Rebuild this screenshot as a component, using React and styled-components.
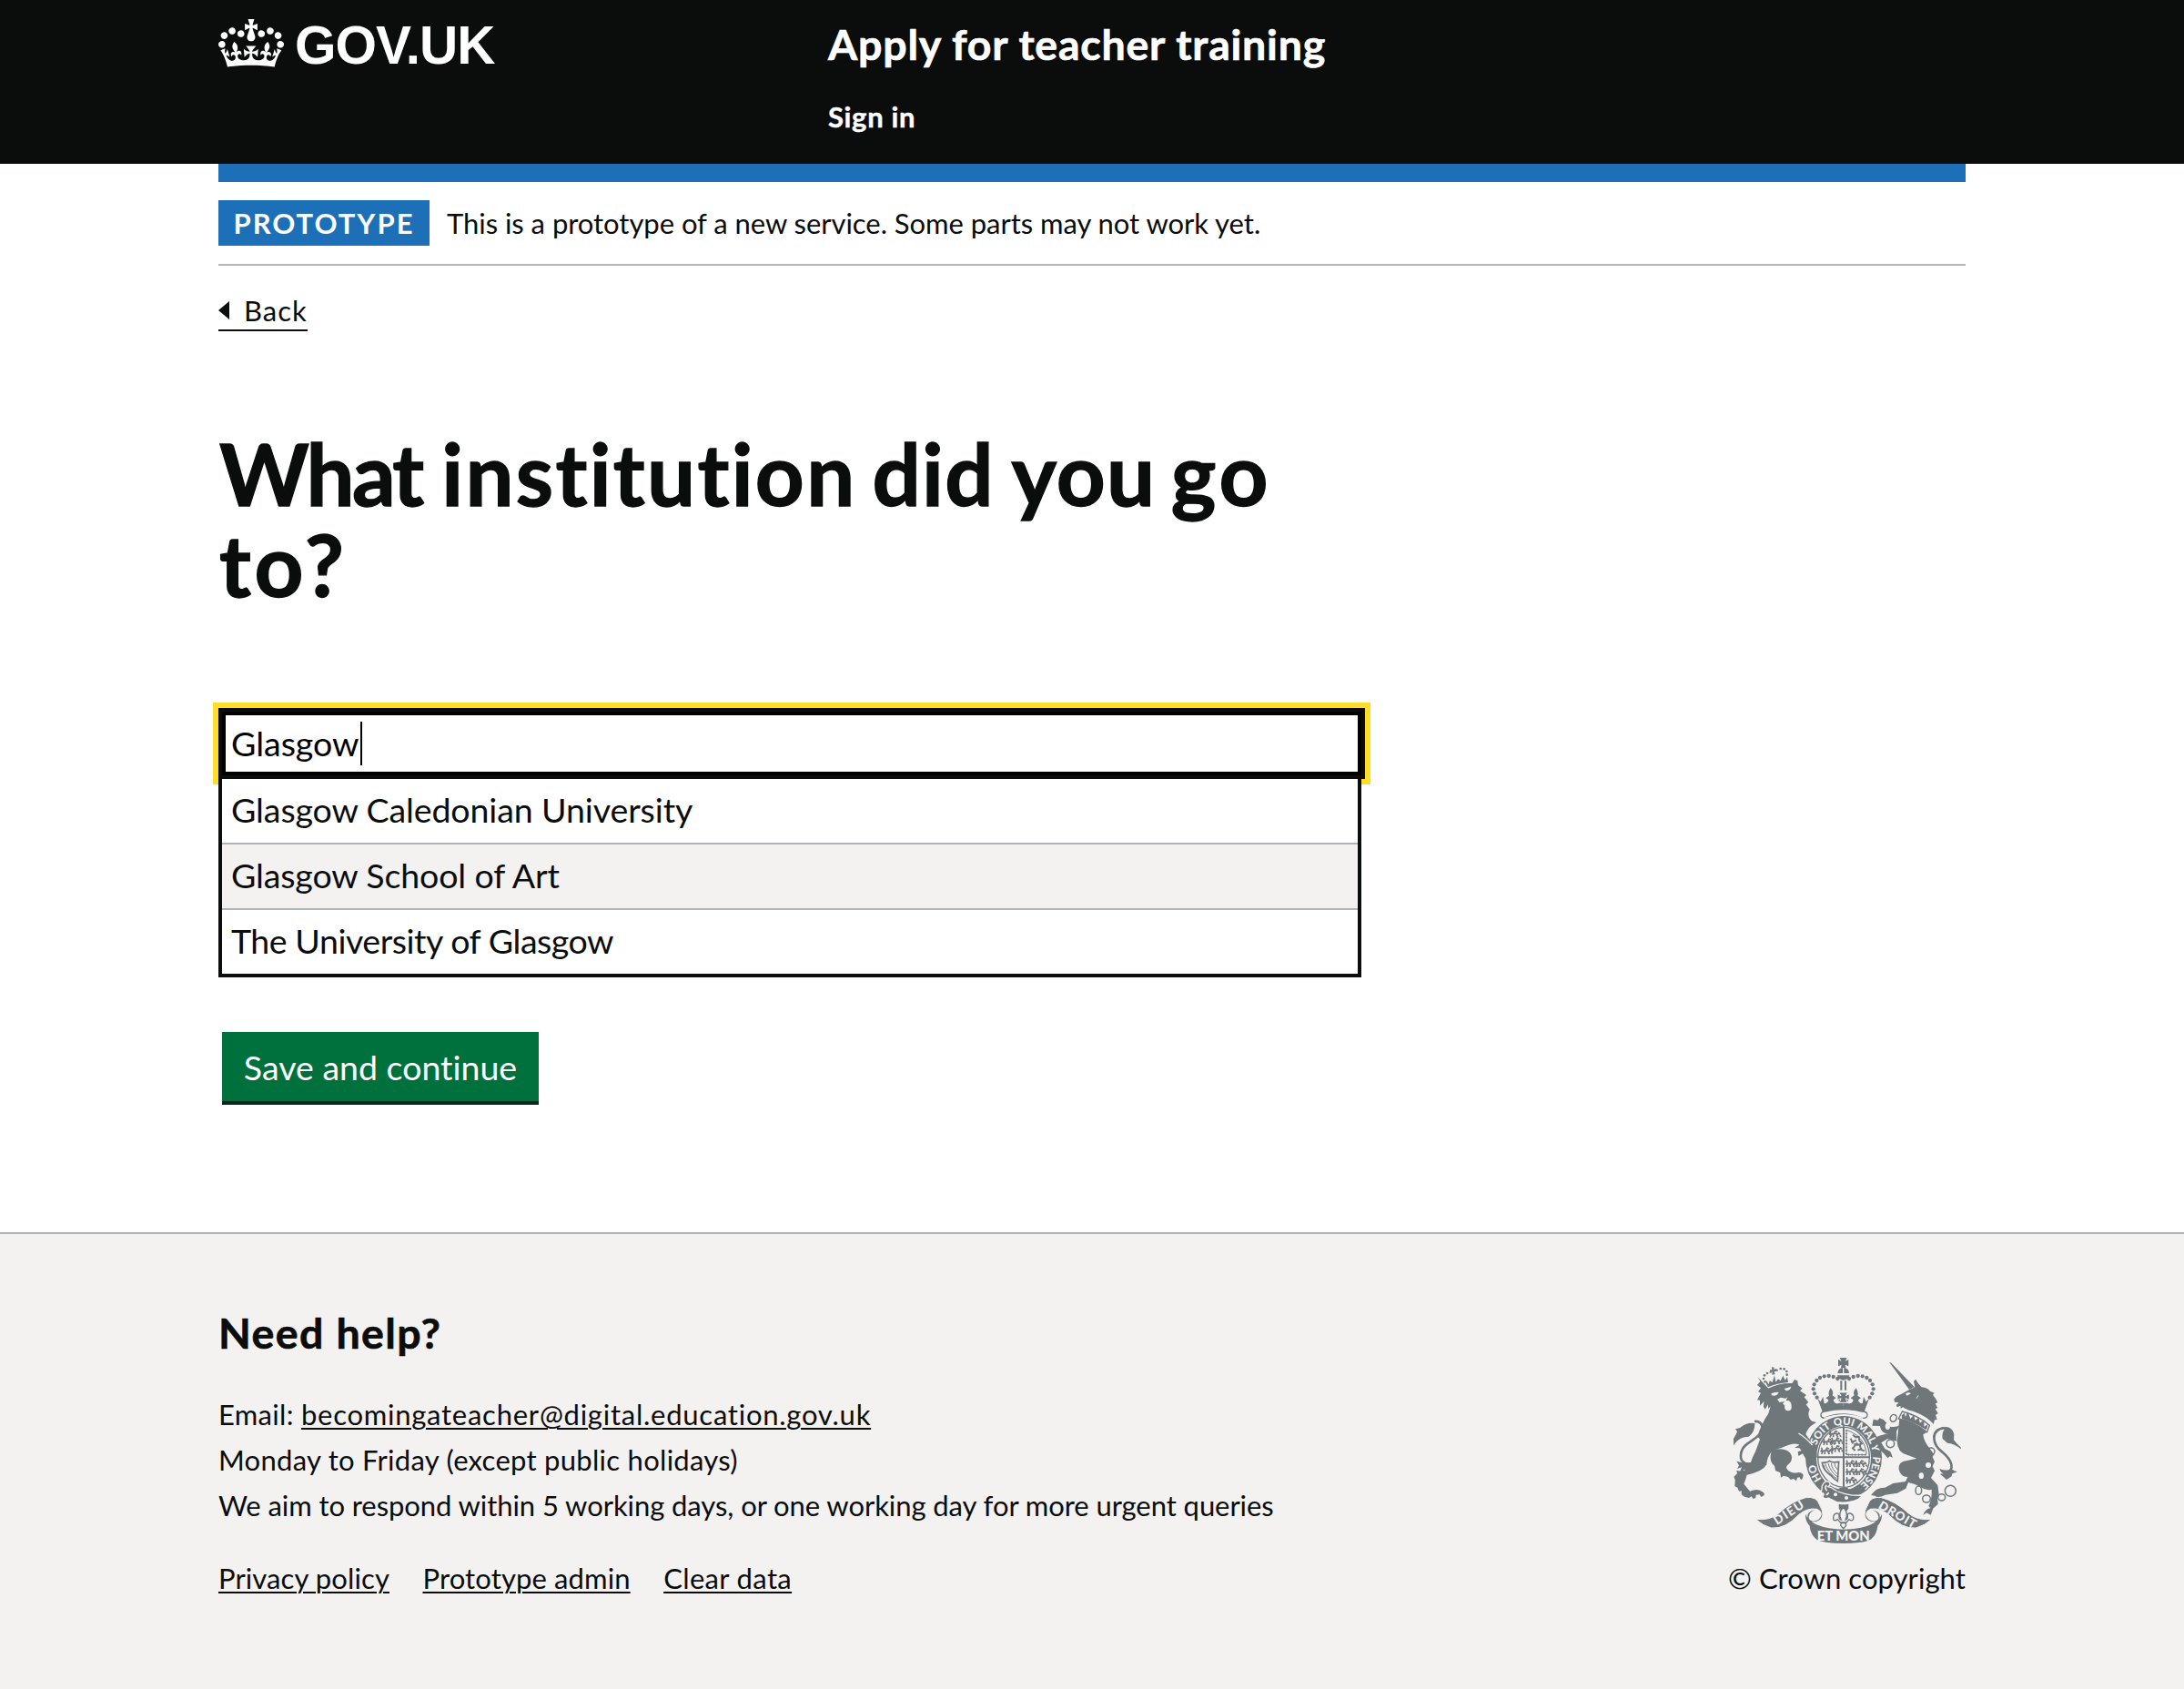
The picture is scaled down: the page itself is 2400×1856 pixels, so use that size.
import React from "react";
import styled, { createGlobalStyle, css } from "styled-components";

const ink = "#0b0c0c";
const blue = "#1d70b8";
const rule = "#b1b4b6";
const pale = "#f3f2f1";
const crestGrey = "#6f777b";

const GlobalStyle = createGlobalStyle`
  * { box-sizing: border-box; }
  body {
    margin: 0;
    background: #fff;
    color: ${ink};
    font-family: Lato, "Open Sans", sans-serif;
    font-kerning: normal;
    font-variant-ligatures: none;
    -webkit-font-smoothing: antialiased;
  }
`;

const tracking = css`
  letter-spacing: ${(p) => p.$track || 0}px;
  white-space: nowrap;
`;

const heavy = css`
  font-weight: 700;
  -webkit-text-stroke: 0.014em currentColor;
`;

const Page = styled.div`
  display: flex;
  flex-direction: column;
  min-height: 1856px;
`;

const Width = styled.div`
  width: 1920px;
  margin: 0 auto;
`;

const Header = styled.header`
  height: 180px;
  background: ${ink};
  color: #fff;
`;

const HeaderRow = styled(Width)`
  display: grid;
  grid-template-columns: 670px 1fr;
`;

const Logo = styled.a`
  display: flex;
  align-items: flex-start;
  gap: 12px;
  padding-top: 21px;
`;

const Crown = styled.svg`
  width: 72px;
  height: 53px;
  fill: #fff;
`;

const LogoText = styled.span`
  margin-top: -3px;
  font: 700 58.5px/64px "Liberation Sans", Arial, sans-serif;
  ${tracking}
`;

const HeaderContent = styled.div`
  display: flex;
  flex-direction: column;
  align-items: flex-start;
  padding-top: 18px;
`;

const ServiceName = styled.a`
  font-size: 46.5px;
  line-height: 60px;
  ${heavy}
  ${tracking}
`;

const NavLink = styled.a`
  margin-top: 30px;
  font-size: 31px;
  line-height: 40px;
  ${heavy}
  ${tracking}
`;

const BlueBar = styled.div`
  height: 20px;
  background: ${blue};
`;

const PhaseBanner = styled.div`
  display: flex;
  align-items: center;
  gap: 19px;
  padding: 20px 0;
  border-bottom: 2px solid ${rule};
`;

const PhaseTag = styled.strong`
  display: flex;
  justify-content: center;
  width: 232px;
  height: 50px;
  background: ${blue};
  color: #fff;
  font-size: 31px;
  font-weight: 700;
  line-height: 50px;
  ${tracking}
`;

const PhaseText = styled.span`
  font-size: 31px;
  line-height: 50px;
  ${tracking}
`;

const BackLink = styled.a`
  display: flex;
  align-items: center;
  width: 98px;
  height: 44px;
  margin-top: 28px;
  border-bottom: 2px solid ${ink};
  font-size: 31px;
  line-height: 42px;
  ${tracking}
`;

const BackArrow = styled.span`
  width: 12px;
  height: 20px;
  margin-right: 16px;
  background: ${ink};
  clip-path: polygon(0 50%, 100% 0, 100% 100%);
`;

const Main = styled.main`
  width: 1260px;
  padding-top: 106px;
`;

const Heading = styled.h1`
  margin: 0 0 108px;
  padding-left: 1px;
  font-size: 94px;
  line-height: 100px;
  word-spacing: -6px;
  ${heavy}
  ${tracking}
`;

const Word = styled.span`
  margin-right: ${(p) => p.$gap || 0}px;
  ${tracking}
`;

const Field = styled.div`
  display: flex;
  align-items: center;
  height: 78px;
  padding-left: 10px;
  border: 4px solid ${ink};
  outline: 6px solid #ffdd2b;
  box-shadow: inset 0 0 0 4px #000;
  color: #000;
  font-size: 37.5px;
  line-height: 48px;
  ${tracking}
`;

const Caret = styled.span`
  width: 2px;
  height: 48px;
  margin-left: 2px;
  background: #000;
`;

const Menu = styled.ul`
  position: relative;
  width: 1256px;
  margin: 0;
  padding: 0;
  list-style: none;
  background: #fff;
  border: 4px solid ${ink};
  border-top: 0;
`;

const Option = styled.li`
  height: ${(p) => (p.$last ? 70 : 72)}px;
  padding: 0 10px;
  border-bottom: ${(p) => (p.$last ? 0 : 2)}px solid ${rule};
  background: ${(p) => (p.$shaded ? pale : "#fff")};
  font-size: 37.5px;
  line-height: 68px;
  ${tracking}
`;

const Button = styled.button`
  display: block;
  width: 348px;
  height: 76px;
  margin: 60px 0 0 4px;
  padding: 0;
  border: 0;
  background: #00703c;
  box-shadow: 0 4px 0 #002d18;
  color: #fff;
  font-family: inherit;
  font-size: 37.5px;
  font-variant-ligatures: none;
  line-height: 75px;
  text-align: center;
  ${tracking}
`;

const Footer = styled.footer`
  flex: 1;
  margin-top: 144px;
  border-top: 2px solid ${rule};
  background: ${pale};
`;

const FooterRow = styled(Width)`
  display: flex;
  justify-content: space-between;
  padding-top: 80px;
`;

const HelpTitle = styled.h2`
  margin: 0 0 37px;
  font-size: 46.5px;
  line-height: 56px;
  ${heavy}
  ${tracking}
`;

const HelpLine = styled.p`
  margin: 0;
  font-size: 31px;
  line-height: 50px;
  ${tracking}
`;

const Link = styled.a`
  text-decoration: underline;
  text-decoration-thickness: 2px;
  text-underline-offset: 3px;
  ${tracking}
`;

const FooterLinks = styled.nav`
  display: flex;
  gap: 36.5px;
  margin-top: 30px;
  font-size: 31px;
  line-height: 50px;
`;

const Rights = styled.div`
  display: flex;
  flex-direction: column;
  align-items: center;
  width: 261px;
  padding-top: 56px;
`;

const Crest = styled.svg`
  width: 250px;
  height: 204px;
`;

const Copyright = styled.a`
  margin-top: 13px;
  font-size: 31px;
  line-height: 50px;
  ${tracking}
`;

function CrownLogo() {
  return (
    <Crown viewBox="0 0 132 97" aria-hidden="true">
      <path
        fillRule="evenodd"
        d="M25 30.2c3.5 1.5 7.7-.2 9.1-3.7 1.5-3.6-.2-7.8-3.9-9.2-3.6-1.4-7.6.3-9.1 3.9-1.4 3.5.3 7.5 3.9 9zM9 39.5c3.6 1.5 7.8-.2 9.2-3.7 1.5-3.6-.2-7.8-3.9-9.1-3.6-1.5-7.6.2-9.1 3.8-1.4 3.5.3 7.5 3.8 9zM4.4 57.2c3.5 1.5 7.7-.2 9.1-3.8 1.5-3.6-.2-7.7-3.9-9.1-3.5-1.5-7.6.3-9.1 3.8-1.4 3.5.3 7.6 3.9 9.1zm38.3-21.4c3.5 1.5 7.7-.2 9.1-3.8 1.5-3.6-.2-7.7-3.9-9.1-3.6-1.5-7.6.3-9.1 3.8-1.3 3.6.4 7.7 3.9 9.1zm64.4-5.6c-3.6 1.5-7.8-.2-9.1-3.7-1.5-3.6.2-7.8 3.8-9.2 3.6-1.4 7.7.3 9.2 3.9 1.3 3.5-.4 7.5-3.9 9zm15.9 9.3c-3.6 1.5-7.7-.2-9.1-3.7-1.5-3.6.2-7.8 3.7-9.1 3.6-1.5 7.7.2 9.2 3.8 1.5 3.5-.3 7.5-3.8 9zm4.7 17.7c-3.6 1.5-7.8-.2-9.2-3.8-1.5-3.6.2-7.7 3.9-9.1 3.6-1.5 7.7.3 9.2 3.8 1.3 3.5-.4 7.6-3.9 9.1zM89.3 35.8c-3.6 1.5-7.8-.2-9.2-3.8-1.4-3.6.2-7.7 3.9-9.1 3.6-1.5 7.7.3 9.2 3.8 1.4 3.6-.3 7.7-3.9 9.1zM69.7 17.7l8.9 4.7V9.3l-8.9 2.8c-.2-.3-.5-.6-.9-.9L72.4 0H59.6l3.5 11.2c-.3.3-.6.5-.9.9l-8.8-2.8v13.1l8.8-4.7c.3.3.6.7.9.9l-5 15.4v.1c-.2.8-.4 1.6-.4 2.4 0 4.1 3.1 7.5 7 8.1h.2c.3 0 .7.1 1 .1.4 0 .7 0 1-.1h.2c4-.6 7.1-4.1 7.1-8.1 0-.8-.1-1.7-.4-2.4V34l-5.1-15.4c.4-.2.7-.6 1-.9zM66 92.8c16.9 0 32.8 1.1 47.1 3.2 4-16.9 8.9-26.7 14-33.5l-9.6-3.4c1 4.9 1.1 7.2 0 10.2-1.5-1.4-3-4.3-4.2-8.7L108.6 76c2.8-2 5-3.2 7.5-3.3-4.4 9.4-10 11.9-13.6 11.2-4.3-.8-6.3-4.6-5.6-7.9 1-4.7 5.7-5.9 8-.5 4.3-8.7-3-11.4-7.6-8.8 7.1-7.2 7.9-13.5 2.1-21.1-8 6.1-8.1 12.3-4.5 20.8-4.7-5.4-12.1-2.5-9.5 6.2 3.4-5.2 7.9-2 7.2 3.1-.6 4.3-6.4 7.8-13.5 7.2-10.3-.9-10.9-8-11.2-13.8 2.5-.5 7.1 1.8 11 7.3L80.2 60c-4.1 4.4-8 5.3-12.3 5.4 1.4-4.4 8-11.6 8-11.6H55.5s6.4 7.2 7.9 11.6c-4.2-.1-8-1-12.3-5.4l1.4 16.4c3.9-5.5 8.5-7.7 10.9-7.3-.3 5.8-.9 12.8-11.1 13.8-7.2.6-12.9-2.9-13.5-7.2-.7-5 3.8-8.3 7.1-3.1 2.7-8.7-4.6-11.6-9.4-6.2 3.7-8.5 3.6-14.7-4.6-20.8-5.8 7.6-5 13.9 2.2 21.1-4.7-2.6-11.9.1-7.7 8.8 2.3-5.5 7.1-4.2 8.1.5.7 3.3-1.3 7.1-5.7 7.9-3.5.7-9-1.8-13.5-11.2 2.5.1 4.7 1.3 7.5 3.3l-4.7-15.4c-1.2 4.4-2.7 7.2-4.3 8.7-1.1-3-.9-5.3 0-10.2l-9.5 3.4c5 6.9 9.9 16.7 14 33.5 14.8-2.1 30.8-3.2 47.7-3.2z"
      />
    </Crown>
  );
}

const pearls = [
  [118, 87], [104, 81], [89, 78], [74, 79], [60, 84], [49, 93], [41, 106], [38, 121], [42, 136], [50, 149],
];

function Lion() {
  return (
    <g transform="translate(60 30)">
      <g stroke="none">
        <circle cx="119" cy="85" r="4" /><circle cx="114" cy="75" r="4" />
        <circle cx="117" cy="64" r="4" /><circle cx="126" cy="57" r="4" />
        <circle cx="137" cy="53" r="3.5" /><circle cx="158" cy="47" r="3.5" />
        <circle cx="170" cy="42" r="4" /><circle cx="182" cy="43" r="4" />
        <circle cx="190" cy="51" r="4" /><circle cx="191" cy="62" r="4" />
        <path d="M141 36l8 2-1 7 8-3 1 8-8 1 3 9-10 2 1-10-7 1-1-7 7 0zM122 90l7 13q30-13 66-16l-3-18-7 11-7-15-8 17-8-6-8 10-4-22-7 23-9-5-3 12-7-12z" />
      </g>
      <path d="M130 107Q165 88 208 90l8-12 10 4 2 15 14 10-8 8 21 14-7 7 14 17-8 7 12 16-4 12q0 20 12 27l14 4-15 10q-14 10-20 29l24 34q14 18 13 43l-10 6 4 14-13-7-6 8-2-13-12-7-8-14-14 8-2-14 12-4-7-8-16-2 17-9q-18-8-38 1-22 10-46 16c28-10 60 4 58 27-1 18-16 20-18 31 4 15 27 20 42 16 17 2 15 12 11 19-2 8-8 5-9-3l-8 1-3 11-9-7-10 3-8-9-15-4-9 6-2-16-16-7-3-15-8-9q-10-16-2-38-15 19-16 42-13 24-65 34-5 19-10 30l20 24q28-11 43 3 7 5 3 11l-9 5-5-8-12 1-1 10-8 3-6-8-8 5-13-3q-16-7-11-20l-9 1-5-12-9-4 1-21-4-11 11-10-2-11 13 3 6-5 15 8 10-8q0-28 18-59l15-41-8-10q12-40 36-75l7-24-8 9 0-15-10 16-5-8 1-18-13 14 0-18-9-1 12-23-9-4 9-12-12-10 10-12-8-14z" />
      <path d="M102 337C84 352 72 359 54 354C31 347 35 308 60 290C83 273 111 258 110 236Q107 214 84 216" fill="none" stroke={crestGrey} strokeWidth="8" />
      <path d="M85 222Q60 217 36 237l-15 4 6 9-7 14-10 16 3 19 5-9Q35 266 65 266 86 251 85 222zM102 333Q80 352 55 355l-30-8 8 14-6 11 15-5-6 15 16-8-3 16Q75 377 83 360z" />
      <g fill={pale}>
        <path d="M139 124q14-6 25-4-7 15-23 10zM182 108l23-7q-3 14-17 14zM159 143l12-6 15 3 7-4-5 10 3 7-12-2-12 2zM184 151q15-10 21 7 5 23-10 23-14-1-11-17l-7-7z" />
      </g>
    </g>
  );
}

function Unicorn() {
  return (
    <g transform="translate(510 30)">
      <path d="M78 20l7 3 76 79-17 9-22-31z" />
      <path d="M146 110q12-3 17-9l-4-17 6-7 10 15 10 11q18 1 28 13l14 6-5 6 10 14 6 12-8 3 8 15-8 2 9 15-8 6 5 15-8 1-4 14-8-9q-31-28-79-39l-5-10q26-6 44-37-8 2-10 17-19 27-34 28l-8-6-8 4-1-9-10 5-4-7 9-8-14-2-2-9q4-10 25-18z" />
      <path d="M132 125q9-8 18-1l-14 7z" fill={pale} />
      <path d="M121 183q55 14 90 46l-8 22q-46-36-94-44z" fill={pale} stroke={crestGrey} strokeWidth="4" />
      <path d="M119 196l9-8 4 13 7-17 9 23 11-12 5 18 12-11 3 19 14-10 0 22 13-8-5 19q-38-25-81-37z" />
      <path d="M112 208q50 10 90 44l-12 7q2 24 22 46l14 20-5 8 7 16-7 15 7 15-12 23 22 24 4 29-5 11 2 22-16 15-8 21-14-7-11 8q6-20 24-23l-6-8q12-23 10-54-17 6-37-8-17-11-40-15l-8 20-28 15-40 6q-23 12-34 3l-13-2q17-26 46-25l27-14 41-6 7-15q-24-1-29-25-4-25 27-29l32-7-32-12q-32-8-33-45z" />
      <path d="M100 252l-33 4q-17-7-19-25l-26-1 4-21 14 3 7-7 13 6 21 22q20 4 33-6zM103 281l-30-8-21 13 12 20 18 9 8 20-10-4-7 6-11-14-17-17-11-28q-2-11 10-14l58-17z" />
      <path d="M258 394C302 375 283 342 252 316C221 292 211 244 260 237" fill="none" stroke={crestGrey} strokeWidth="8" />
      <path d="M254 236q29-8 38 21l-1 20 10 12 14 13-1 5Q291 287 270 287l-16-14q-3-20 6-30zM281 371q-9 11-37 1 5 15 14 16l-13 1q15 11 22 19l17-11 2-9 17-6-10-3z" />
      <g fill="none" stroke={crestGrey} strokeWidth="4.5">
        <ellipse cx="92" cy="205" rx="10" ry="12" transform="rotate(30 92 205)" />
        <circle cx="82" cy="289" r="13" />
        <circle cx="216" cy="315" r="12" />
        <ellipse cx="175" cy="443" rx="10" ry="14" />
        <ellipse cx="201" cy="471" rx="13" ry="12" />
        <ellipse cx="251" cy="466" rx="12" ry="11" />
        <circle cx="280" cy="445" r="18" />
      </g>
      <g fill={pale}>
        <ellipse cx="73" cy="232" rx="8" ry="11" />
        <circle cx="207" cy="360" r="9" />
        <ellipse cx="184" cy="395" rx="8" ry="10" />
      </g>
    </g>
  );
}

function HalfCrown() {
  return (
    <g>
      {pearls.map(([x, y]) => (
        <circle key={x} cx={x} cy={y} r="6.4" />
      ))}
      <path d="M137 196H68l-16-44 10 11 8-17 4 23q13-1 14-12l-9-6 11-8q-4-11 5-25 12 12 6 24l12 9-9 6q4 17 20 10l-6-21 9 7 10-8z" />
    </g>
  );
}

function Royal({ x, y }) {
  return (
    <path
      transform={`translate(${x} ${y})`}
      d="M0 13q8-8 2-13M4 12q15-7 24 0l6-7M7 12l-4 9M14 10v11M24 12l5 9M29 7l8 4M17 8l4-7 7 2M36 14l3 6"
    />
  );
}

function Shield() {
  return (
    <g transform="translate(300 18)">
      <path d="M125 18h24l-6 11 11-5v22l-11-5 2 10h-16l2-10-11 5V24l11 5z" />
      <path d="M118 69q2-17 17-18v18zM139 69V51q16 2 17 18zM117 76h40q-2 15-20 16-17-1-20-16z" />
      <path d="M127 94h6v31h-6zM141 94h6v31h-6z" />
      <HalfCrown />
      <g transform="matrix(-1 0 0 1 274 0)"><HalfCrown /></g>
      <path d="M122 132h30l-7 11 12-6v20l-12-5 5 14h-26l5-14-12 5v-20l12 6z" stroke={pale} strokeWidth="3" />
      <path d="M69 190Q137 166 205 190v11Q137 181 69 201z" />
      <path d="M76 195Q137 180 198 195q18 0 18 11 0 12-15 11Q137 191 73 217q-12-3-10-12 2-10 13-10z" fill={pale} stroke={crestGrey} strokeWidth="4" />
      <path d="M72 190Q137 171 202 190v4Q137 178 72 194z" />
      <ellipse cx="138" cy="347" rx="132" ry="142" fill={pale} />
      <ellipse cx="138" cy="346" rx="126" ry="136" />
      <path d="M74 217Q137 197 202 217" fill="none" stroke={pale} strokeWidth="4" />
      <ellipse cx="138" cy="348" rx="90" ry="105" fill={pale} />
      <ellipse cx="138" cy="346" rx="85" ry="99" fill="none" stroke={crestGrey} strokeWidth="4" />
      <path d="M138 244v203M52 346h172" stroke={crestGrey} strokeWidth="6" />
      <g fill="none" stroke={crestGrey} strokeWidth="5">
        <Royal x="90" y="259" />
        <Royal x="69" y="285" />
        <Royal x="96" y="282" />
        <Royal x="62" y="315" />
        <Royal x="96" y="308" />
        <Royal x="145" y="357" />
        <Royal x="176" y="357" />
        <Royal x="145" y="384" />
        <Royal x="176" y="384" />
        <Royal x="145" y="412" />
      </g>
      <path d="M147 256v82h65l1-8q-7-49-53-69z" fill="none" stroke={crestGrey} strokeWidth="3" />
      <path d="M147 256v82h65" fill="none" stroke={crestGrey} strokeWidth="7" strokeDasharray="3 8" />
      <path d="M168 272l10 8 10-2 2 13 8 10-7 3 4 17 12 4M180 290l-16 7M183 298l-15 18 8 8M194 305l-22-2M199 318l-15 5M161 284l7 17" fill="none" stroke={crestGrey} strokeWidth="6" />
      <path d="M67 364q20 0 24-6 9 7 31 3l-4 64q-19-13-19-18-29-17-32-43z" fill="none" stroke={crestGrey} strokeWidth="5" />
      <path d="M77 367q9 30 37 49M87 366q7 28 30 44M97 366q3 21 20 35M108 366q0 12 11 22M72 371q6 30 34 43" fill="none" stroke={crestGrey} strokeWidth="3" />
      <path d="M67 440q10-21 23-12 8 8-3 15l8 2q42 31 106 26l-14 13q-32 15-72 10l-28-14q-13 8-19-7 7-2 3-8-10 0-5-13z" stroke={pale} strokeWidth="4" />
      <path d="M82 438q-9 7 1 19M80 470q7-1 8-8" fill="none" stroke={pale} strokeWidth="5" />
      <path d="M126 447h25l8 11q-22 5-46-1z" />
      <circle cx="111" cy="469" r="6" fill={pale} />
      <circle cx="147" cy="480" r="6" fill={pale} />
      <path d="M122 500q16 4 32 0v15l-7 9h-18l-7-9z" />
      <path d="M137 510q18 21 7 42 8-2 7-12-2-10 9-9 12 4 10 18-3 10-14 2l-9 10h-20l-9-10q-12 8-14-2-1-15 10-18 10-1 9 9-1 10 7 12-12-21 7-42z" fill={pale} stroke={crestGrey} strokeWidth="4" />
      <path d="M130 563l-2 8 9 10 9-10-2-8z" fill={pale} stroke={crestGrey} strokeWidth="4" />
    </g>
  );
}

function GarterMotto() {
  return (
    <g transform="translate(300 18)" fill={pale} fontFamily="Lato, sans-serif" fontWeight="900" fontSize="34">
      <defs>
        <path id="garter" d="M138 455A96 109 0 0 1 42 346A96 107 0 0 1 138 239A96 107 0 0 1 234 346A96 109 0 0 1 138 455" />
      </defs>
      <text><textPath href="#garter" startOffset="84">HO</textPath></text>
      <text><textPath href="#garter" startOffset="200">SOIT</textPath></text>
      <text><textPath href="#garter" startOffset="289">QUI</textPath></text>
      <text><textPath href="#garter" startOffset="362">MAL</textPath></text>
      <text><textPath href="#garter" startOffset="440">Y</textPath></text>
      <text><textPath href="#garter" startOffset="477">PENSE</textPath></text>
    </g>
  );
}

function HalfScroll() {
  return (
    <g>
      <path d="M148 568Q195 574 225 548Q265 510 313 497Q350 492 358 520Q370 540 369 555Q365 577 336 579Q313 576 318 552Q325 538 350 535Q320 529 290 553Q245 602 199 597Q172 590 148 568z" stroke={pale} strokeWidth="3" />
      <path d="M323 561Q325 542 351 534Q367 542 365 555Q358 574 338 575Q322 573 323 561z" fill={pale} />
      <path d="M312 551Q318 570 348 586Q385 602 439 602V648Q366 648 347 634Q328 617 326 590Q310 572 312 551z" />
    </g>
  );
}

function CrestArt() {
  return (
    <Crest viewBox="75 36 750 612" fill={crestGrey} role="img" aria-label="Royal coat of arms">
      <Shield />
      <Lion />
      <GarterMotto />
      <Unicorn />
      <path d="M289 285Q312 298 335 324" fill="none" stroke={pale} strokeWidth="4" />
      <HalfScroll />
      <g transform="matrix(-1 0 0 1 876 0)"><HalfScroll /></g>
      <g fill={pale} fontFamily="Lato, sans-serif" fontWeight="900">
        <text transform="translate(218 588) rotate(-33)" fontSize="40" textLength="110">DIEU</text>
        <text transform="translate(550 531) rotate(30)" fontSize="40" textLength="136">DROIT</text>
        <text x="350" y="639" fontSize="45" textLength="174" lengthAdjust="spacingAndGlyphs">ET MON</text>
      </g>
    </Crest>
  );
}

const options = [
  { label: "Glasgow Caledonian University", track: -0.1 },
  { label: "Glasgow School of Art", track: -0.12, shaded: true },
  { label: "The University of Glasgow", track: -0.45 },
];

export default function App() {
  return (
    <Page>
      <GlobalStyle />
      <Header>
        <HeaderRow>
          <Logo>
            <CrownLogo />
            <LogoText $track={-1}>GOV.UK</LogoText>
          </Logo>
          <HeaderContent>
            <ServiceName $track={0.77}>Apply for teacher training</ServiceName>
            <NavLink $track={0.65}>Sign in</NavLink>
          </HeaderContent>
        </HeaderRow>
      </Header>
      <Width>
        <BlueBar />
        <PhaseBanner>
          <PhaseTag $track={2}>PROTOTYPE</PhaseTag>
          <PhaseText $track={-0.04}>This is a prototype of a new service. Some parts may not work yet.</PhaseText>
        </PhaseBanner>
        <BackLink $track={1}>
          <BackArrow />
          Back
        </BackLink>
        <Main>
          <Heading $track={1.2}>
            <Word $track={-2.6} $gap={3.5}>What</Word> <Word $track={2.3} $gap={-1}>institution</Word>{" "}
            <Word $track={1.2} $gap={3}>did</Word> <Word $track={1.2} $gap={-1.5}>you</Word>{" "}
            <Word $track={4}>go</Word>
            <br />
            <Word $track={4}>to?</Word>
          </Heading>
          <Field>
            Glasgow
            <Caret />
          </Field>
          <Menu>
            {options.map((o, i) => (
              <Option key={o.label} $track={o.track} $shaded={o.shaded} $last={i === options.length - 1}>
                {o.label}
              </Option>
            ))}
          </Menu>
          <Button>Save and continue</Button>
        </Main>
      </Width>
      <Footer>
        <FooterRow>
          <div>
            <HelpTitle $track={1.4}>Need help?</HelpTitle>
            <HelpLine $track={0.3}>
              Email: <Link $track={0.75}>becomingateacher@digital.education.gov.uk</Link>
            </HelpLine>
            <HelpLine $track={0.28}>Monday to Friday (except public holidays)</HelpLine>
            <HelpLine $track={-0.07}>We aim to respond within 5 working days, or one working day for more urgent queries</HelpLine>
            <FooterLinks>
              <Link $track={0.1}>Privacy policy</Link>
              <Link $track={0.12}>Prototype admin</Link>
              <Link $track={0.35}>Clear data</Link>
            </FooterLinks>
          </div>
          <Rights>
            <CrestArt />
            <Copyright $track={0.05}>© Crown copyright</Copyright>
          </Rights>
        </FooterRow>
      </Footer>
    </Page>
  );
}
